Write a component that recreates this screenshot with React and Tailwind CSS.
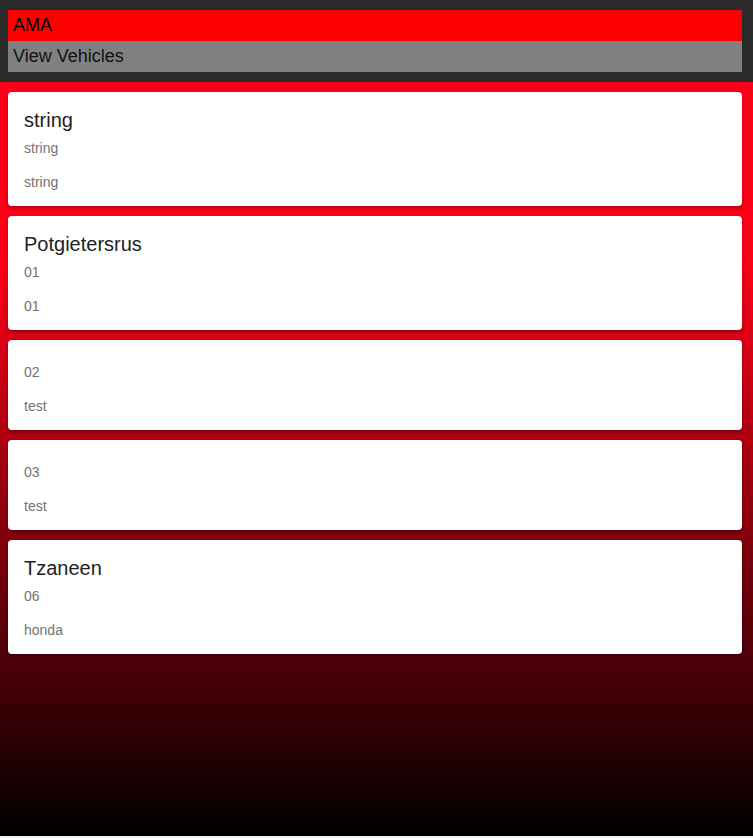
export default function App() {
  const cards = [
    { title: "string", a: "string", b: "string" },
    { title: "Potgietersrus", a: "01", b: "01" },
    { title: null, a: "02", b: "test" },
    { title: null, a: "03", b: "test" },
    { title: "Tzaneen", a: "06", b: "honda" },
  ];
  return (
    <div className="w-[753px] min-h-[838px] bg-[#f3f3f3]" style={{ fontFamily: '"Liberation Sans", Arial, sans-serif' }}>
      <div className="bg-[#2a2a2a] pt-[10px] pb-[10px] pl-2 pr-[11px]">
        <div className="bg-[#ff0000] h-[31px] flex items-center pl-[5px] text-[18px] text-black">AMA</div>
        <div className="bg-[#808080] h-[31px] flex items-center pl-[5px] text-[18px] text-[#111]">View Vehicles</div>
      </div>
      <div className="h-[754px] bg-[linear-gradient(to_bottom,#ff0019_0px,#ff0019_178px,#000000_754px)] pt-[10px] pl-2 pr-[11px] flex flex-col gap-[10px]">
        {cards.map((c, i) => (
          <div key={i} className="bg-white rounded-[4px] shadow-[0_2px_4px_rgba(0,0,0,0.35)] px-4 py-4">
            {c.title && <div className="text-[20px] leading-6 text-[#222]">{c.title}</div>}
            <div className="mt-2 text-[14px] leading-4 text-[#737373]">{c.a}</div>
            <div className="mt-[18px] text-[14px] leading-4 text-[#737373]">{c.b}</div>
          </div>
        ))}
      </div>
    </div>
  );
}
